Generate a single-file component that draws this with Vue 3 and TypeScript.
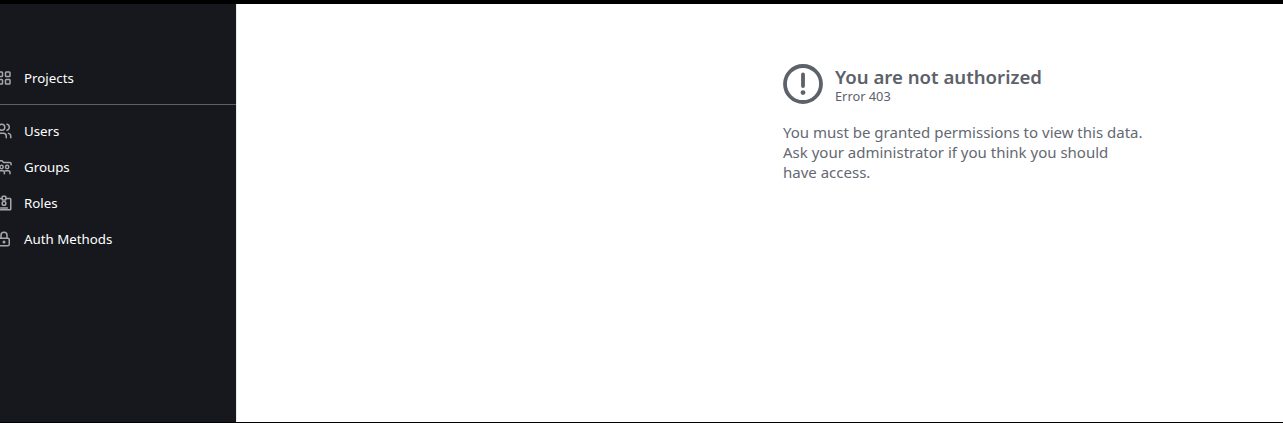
<template>
  <div class="frame">
    <aside class="sidebar">
      <nav class="nav-list">
        <a v-for="item in topItems" :key="item.label" class="nav-item">
          <svg class="nav-icon" viewBox="0 0 24 24" fill="none" stroke="currentColor" stroke-width="2" stroke-linejoin="round" stroke-linecap="round">
            <path v-for="d in item.paths" :key="d" :d="d" />
          </svg>
          <span>{{ item.label }}</span>
        </a>
      </nav>
      <div class="divider"></div>
      <nav class="nav-list lower">
        <a v-for="item in bottomItems" :key="item.label" class="nav-item">
          <svg class="nav-icon" viewBox="0 0 24 24" fill="none" stroke="currentColor" stroke-width="2" stroke-linejoin="round" stroke-linecap="round">
            <path v-for="d in item.paths" :key="d" :d="d" />
          </svg>
          <span>{{ item.label }}</span>
        </a>
      </nav>
    </aside>
    <main class="content">
      <section class="error-box">
        <header class="error-head">
          <svg class="alert-icon" viewBox="0 0 40 40" fill="none">
            <circle cx="20" cy="20" r="18" stroke="currentColor" stroke-width="3.800" />
            <path d="M20 10.500v11.500" stroke="currentColor" stroke-width="3.800" stroke-linecap="round" />
            <circle cx="20" cy="28.600" r="2.400" fill="currentColor" />
          </svg>
          <div>
            <h1 class="error-title">You are not authorized</h1>
            <div class="error-code">Error 403</div>
          </div>
        </header>
        <p class="error-text">You must be granted permissions to view this data. Ask your administrator if you think you should have access.</p>
      </section>
    </main>
  </div>
</template>

<script setup lang="ts">
interface NavItem {
  label: string
  paths: string[]
}

const topItems: NavItem[] = [
  {
    label: 'Projects',
    paths: [
      'M5 4h4a1 1 0 0 1 1 1v4a1 1 0 0 1-1 1h-4a1 1 0 0 1-1-1v-4a1 1 0 0 1 1-1z',
      'M15 4h4a1 1 0 0 1 1 1v4a1 1 0 0 1-1 1h-4a1 1 0 0 1-1-1v-4a1 1 0 0 1 1-1z',
      'M5 14h4a1 1 0 0 1 1 1v4a1 1 0 0 1-1 1h-4a1 1 0 0 1-1-1v-4a1 1 0 0 1 1-1z',
      'M15 14h4a1 1 0 0 1 1 1v4a1 1 0 0 1-1 1h-4a1 1 0 0 1-1-1v-4a1 1 0 0 1 1-1z'
    ]
  }
]

const bottomItems: NavItem[] = [
  {
    label: 'Users',
    paths: [
      'M5 7a4 4 0 1 0 8 0a4 4 0 0 0-8 0',
      'M3 21v-2a4 4 0 0 1 4-4h4a4 4 0 0 1 4 4v2',
      'M16 3.130a4 4 0 0 1 0 7.750',
      'M21 21v-2a4 4 0 0 0-3-3.850'
    ]
  },
  {
    label: 'Groups',
    paths: [
      'M2.500 12v-7a1.500 1.500 0 0 1 1.500-1.500h5l2.500 2.500h8a2 2 0 0 1 2 2v1',
      'M6.500 12a2.200 2.200 0 1 0 4.400 0a2.200 2.200 0 0 0-4.400 0',
      'M14 12a2.200 2.200 0 1 0 4.400 0a2.200 2.200 0 0 0-4.400 0',
      'M4.500 21v-1.500a2.500 2.500 0 0 1 2.500-2.500h3.500a2 2 0 0 1 2 2v2',
      'M13.500 17.300a2 2 0 0 1 1-.300h3a2.500 2.500 0 0 1 2.500 2.500v1.500'
    ]
  },
  {
    label: 'Roles',
    paths: [
      'M9.500 6h-5.500a1 1 0 0 0-1 1v13a1 1 0 0 0 1 1h16a1 1 0 0 0 1-1v-13a1 1 0 0 0-1-1h-5.500',
      'M10.500 3h3a1 1 0 0 1 1 1v3a1 1 0 0 1-1 1h-3a1 1 0 0 1-1-1v-3a1 1 0 0 1 1-1z',
      'M9.500 12.500a2.500 2.500 0 1 0 5 0a2.500 2.500 0 0 0-5 0',
      'M7.500 18.500h9'
    ]
  },
  {
    label: 'Auth Methods',
    paths: [
      'M5 13a2 2 0 0 1 2-2h10a2 2 0 0 1 2 2v6a2 2 0 0 1-2 2h-10a2 2 0 0 1-2-2z',
      'M11 16a1 1 0 1 0 2 0a1 1 0 0 0-2 0',
      'M8 11v-4a4 4 0 1 1 8 0v4'
    ]
  }
]
</script>

<style>
html,
body {
  margin: 0;
  background: #000;
  overflow: hidden;
}
</style>

<style scoped>
.frame {
  box-sizing: border-box;
  height: 423px;
  padding: 4px 0 1px;
  display: flex;
  background: #000;
  font-family: "Noto Sans", "Open Sans", sans-serif;
}

.sidebar {
  width: 236px;
  flex: none;
  overflow: hidden;
  background: #16181d;
  box-sizing: border-box;
  padding-top: 56px;
}

.nav-list {
  display: flex;
  flex-direction: column;
  margin-left: -5px;
}

.nav-item {
  height: 36px;
  display: flex;
  align-items: center;
  gap: 11px;
  color: #fff;
  font-size: 13.300px;
}

.nav-icon {
  width: 18px;
  height: 18px;
  flex: none;
  color: #a6a7ab;
}

.divider {
  height: 1px;
  background: #5c5f66;
  margin-top: 8px;
}

.lower {
  margin-top: 8px;
}

.content {
  flex: 1;
  background: #fff;
  border-left: 1px solid #e9ecef;
  padding: 60px 0 0 546px;
}

.error-box {
  width: 360px;
  color: #5c616a;
}

.error-head {
  display: flex;
  align-items: center;
  gap: 12px;
}

.alert-icon {
  width: 40px;
  height: 40px;
  flex: none;
}

.error-title {
  margin: 0;
  font-size: 18.600px;
  line-height: 25px;
  font-weight: 600;
}

.error-code {
  font-size: 12.800px;
  line-height: 15px;
}

.error-text {
  margin: 18px 0 0;
  font-size: 15px;
  line-height: 20px;
  color: #646872;
}
</style>
